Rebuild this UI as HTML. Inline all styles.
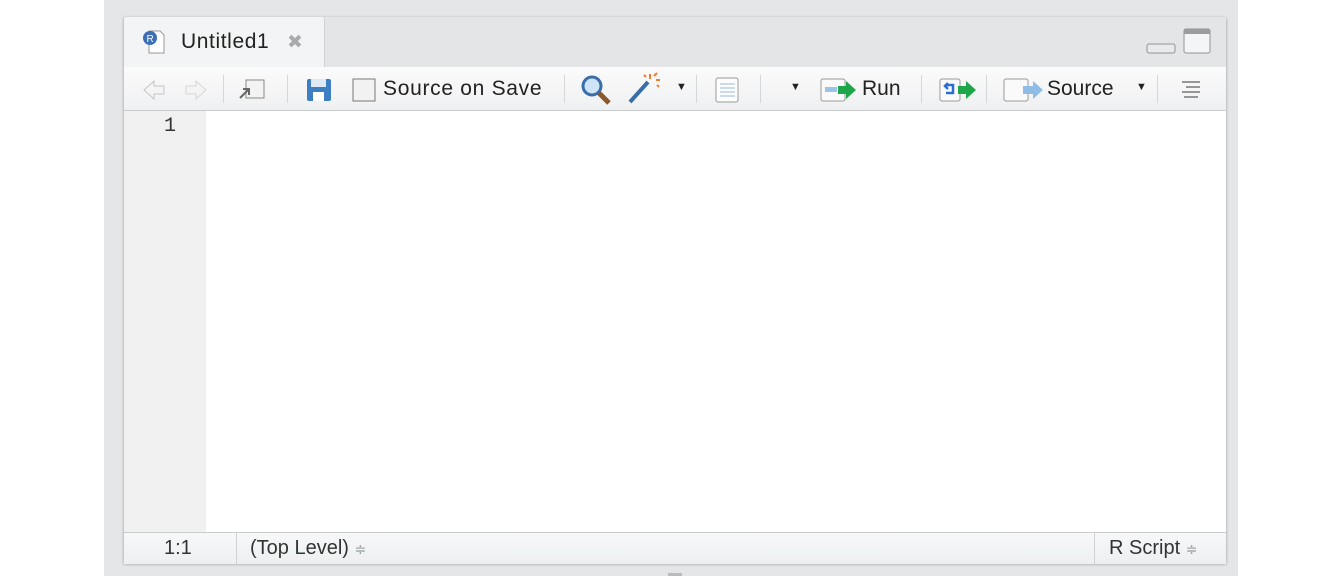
<!DOCTYPE html>
<html><head><style>
body{margin:0;width:1344px;height:576px;background:#fff;position:relative;overflow:hidden;font-family:"Liberation Sans","DejaVu Sans",sans-serif;}
.bg{position:absolute;left:104px;top:0;width:1134px;height:576px;background:#e5e6e8;}
.pane{position:absolute;left:124px;top:17px;width:1102px;height:546px;background:#e4e5e7;box-shadow:0 1px 3px rgba(0,0,0,.35);}
.tab{position:absolute;left:0;top:0;width:200px;height:50px;background:#f3f4f5;border-right:1px solid #cfd1d3;border-radius:3px 3px 0 0;}
.tb{position:absolute;left:0;top:50px;width:1102px;height:43px;background:linear-gradient(#fbfbfc,#eff0f1);border-bottom:1px solid #c9cbcd;}
.ed{position:absolute;left:0;top:94px;width:1102px;height:421px;background:#fff;}
.gut{position:absolute;left:0;top:0;width:82px;height:421px;background:#f0f0f0;}
.st{position:absolute;left:0;top:515px;width:1102px;height:31px;background:linear-gradient(#f7f8f9,#eeeff0);border-top:1px solid #c9cbcd;font-size:20px;color:#333;}
.t{position:absolute;white-space:nowrap;}
.sep{position:absolute;top:8px;width:1px;height:28px;background:#d5d7d9;}
</style></head><body>
<div class="bg"></div>
<div class="pane">
 <div class="tab">
  <svg class="t" style="left:18px;top:12px" width="24" height="26"><path d="M7 2h11l4 4v18H7z" fill="#fff" stroke="#999"/><circle cx="8" cy="9" r="7" fill="#3d6fb5"/><text x="4.5" y="13" font-size="10" fill="#fff" font-family="Liberation Sans">R</text></svg>
  <div class="t" style="left:57px;top:13px;font-size:21px;color:#222;letter-spacing:0.6px">Untitled1</div>
  <div class="t" style="left:163px;top:14px;font-size:19px;color:#aaa">✖</div>
 </div>
 <svg class="t" style="left:1022px;top:10px" width="66" height="28"><rect x="1" y="17" width="28" height="9" rx="2" fill="#e9eaeb" stroke="#8f9294"/><rect x="38" y="2" width="26" height="24" rx="2" fill="#f4f5f6" stroke="#8f9294"/><rect x="38" y="2" width="26" height="5" fill="#9a9c9e"/></svg>
 <div class="tb">
  <svg class="t" style="left:18px;top:12px" width="66" height="22"><path d="M2 11l10-9v5h10v8H12v5z" fill="#f4f4f4" stroke="#c3c5c7"/><path d="M64 11L54 2v5H44v8h10v5z" fill="#f4f4f4" stroke="#d5d7d9"/></svg>
  <div class="sep" style="left:99px"></div>
  <svg class="t" style="left:113px;top:9px" width="30" height="26"><rect x="9" y="4" width="18" height="18" fill="#f3f3f3" stroke="#888"/><path d="M3 22l9-9M6 13h6v6" stroke="#666" fill="none" stroke-width="2"/></svg>
  <div class="sep" style="left:163px"></div>
  <svg class="t" style="left:181px;top:10px" width="28" height="26"><rect x="2" y="2" width="24" height="22" rx="2" fill="#3e7fc4"/><rect x="6" y="2" width="15" height="8" fill="#dfe9f4"/><rect x="8" y="15" width="11" height="9" fill="#fff"/></svg>
  <svg class="t" style="left:228px;top:11px" width="24" height="24"><rect x="1" y="1" width="22" height="22" fill="#f2f2f2" stroke="#777"/></svg>
  <div class="t" style="left:259px;top:10px;font-size:21px;color:#222;letter-spacing:0.7px">Source on Save</div>
  <div class="sep" style="left:440px"></div>
  <svg class="t" style="left:456px;top:7px" width="34" height="32"><circle cx="12" cy="12" r="9" fill="#cfe4f7" stroke="#3a6ea8" stroke-width="3"/><path d="M19 19l10 10" stroke="#8b5a2b" stroke-width="5"/></svg>
  <svg class="t" style="left:502px;top:4px" width="36" height="34"><path d="M4 31L22 11" stroke="#3a6ea8" stroke-width="4"/><path d="M24 3v5M30 9h4M28 5l3-3M20 6l-2-2M31 14l2 2" stroke="#ef7b2c" stroke-width="2"/></svg>
  <div class="t" style="left:552px;top:14px;font-size:11px;color:#222">▼</div>
  <div class="sep" style="left:572px"></div>
  <svg class="t" style="left:589px;top:9px" width="28" height="28"><rect x="3" y="2" width="22" height="24" rx="2" fill="#fdfdfd" stroke="#999"/><path d="M7 8h15M7 12h15M7 16h15M7 20h15" stroke="#9cb7e0"/></svg>
  <div class="sep" style="left:636px"></div>
  <div class="t" style="left:666px;top:14px;font-size:11px;color:#222">▼</div>
  <svg class="t" style="left:696px;top:9px" width="40" height="28"><rect x="1" y="3" width="24" height="22" rx="2" fill="#fafafa" stroke="#999"/><rect x="5" y="11" width="12" height="5" fill="#9cc3e8"/><path d="M18 10h8V5l10 9-10 9v-5h-8z" fill="#1fa64a"/></svg>
  <div class="t" style="left:738px;top:10px;font-size:21px;color:#222">Run</div>
  <div class="sep" style="left:797px"></div>
  <svg class="t" style="left:814px;top:9px" width="42" height="28"><rect x="2" y="3" width="20" height="22" rx="2" fill="#fafafa" stroke="#999"/><path d="M8 9h7v8h-7M10 7l-3 3 3 3" stroke="#2a6ed0" stroke-width="2.5" fill="none"/><path d="M20 10h8V5l10 9-10 9v-5h-8z" fill="#1fa64a"/></svg>
  <div class="sep" style="left:862px"></div>
  <svg class="t" style="left:879px;top:9px" width="44" height="28"><rect x="1" y="3" width="24" height="22" rx="2" fill="#fafafa" stroke="#999"/><path d="M20 10h10V5l10 9-10 9v-5H20z" fill="#8fbde6"/></svg>
  <div class="t" style="left:923px;top:10px;font-size:21px;color:#222">Source</div>
  <div class="t" style="left:1012px;top:14px;font-size:11px;color:#222">▼</div>
  <div class="sep" style="left:1033px"></div>
  <svg class="t" style="left:1055px;top:12px" width="24" height="20"><path d="M3 3h18M7 8h14M3 13h18M5 18h14" stroke="#777" stroke-width="1.5"/></svg>
 </div>
 <div class="ed"><div class="gut"></div><div class="t" style="left:40px;top:4px;font-family:'Liberation Mono',monospace;font-size:20px;color:#333">1</div></div>
 <div class="st">
  <div class="t" style="left:40px;top:4px">1:1</div>
  <div style="position:absolute;left:112px;top:0;width:1px;height:31px;background:#cfd1d3"></div>
  <div class="t" style="left:126px;top:4px">(Top Level) <span style="color:#999;font-size:14px">≑</span></div>
  <div style="position:absolute;left:970px;top:0;width:1px;height:31px;background:#cfd1d3"></div>
  <div class="t" style="left:985px;top:4px">R Script <span style="color:#999;font-size:14px">≑</span></div>
 </div>
</div>
<div style="position:absolute;left:668px;top:573px;width:14px;height:3px;background:#bbb"></div>
</body></html>
